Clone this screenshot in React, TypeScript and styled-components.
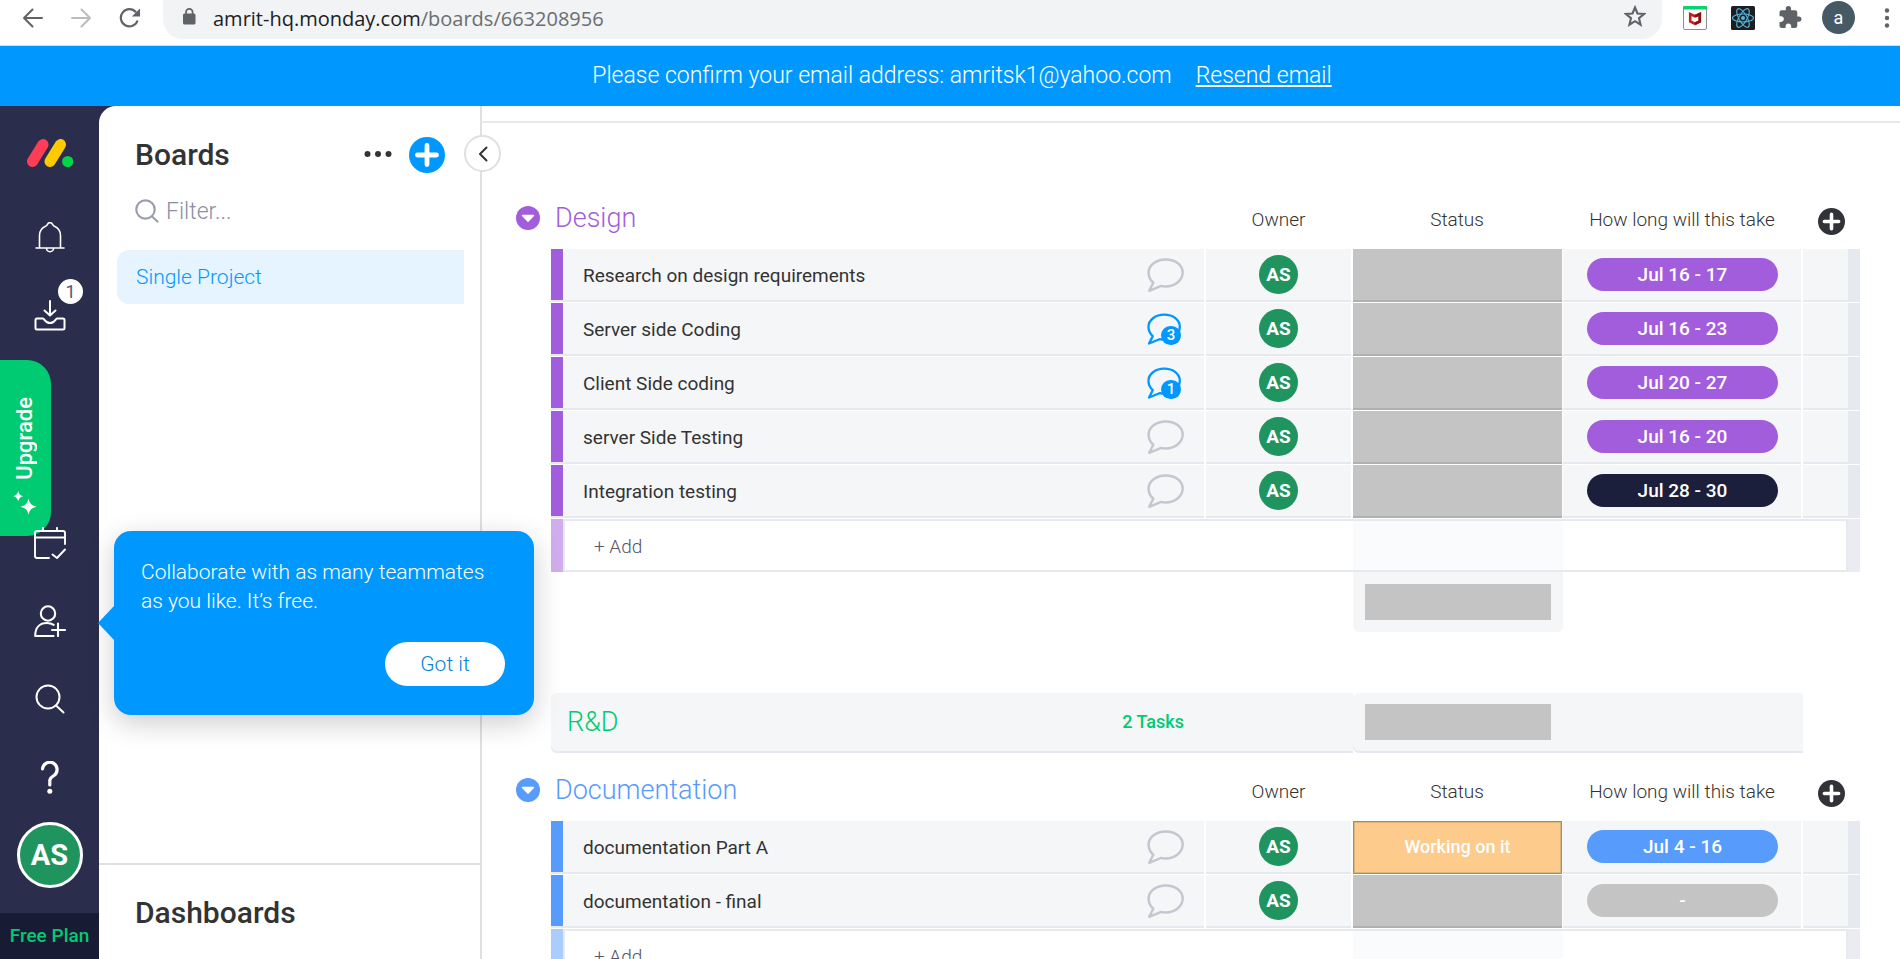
import React from 'react';
import styled, { createGlobalStyle } from 'styled-components';

const GlobalStyle = createGlobalStyle`
  *, *::before, *::after { box-sizing: border-box; }
  body {
    margin: 0;
    background: #fff;
    color: #333;
    font-family: Roboto, "Liberation Sans", sans-serif;
    font-size: 19px;
  }
  button, input { font: inherit; color: inherit; }
  h2, p { margin: 0; }
`;

const Page = styled.div`
  display: flex;
  flex-direction: column;
  height: 100vh;
  overflow: hidden;
`;

const PlainButton = styled.button`
  display: flex;
  align-items: center;
  justify-content: center;
  padding: 0;
  border: 0;
  background: none;
  cursor: pointer;
`;

/* ---------- Browser bar ---------- */

const BrowserBar = styled.header`
  flex: none;
  display: flex;
  align-items: flex-start;
  height: 46px;
  padding: 0 10px 0 23px;
  border-bottom: 1px solid #dadce0;
`;

const NavButtons = styled.div`
  display: flex;
  gap: 28px;
  margin-right: 22px;
`;

const BarButton = styled(PlainButton)`
  height: 35px;
`;

const AddressBar = styled.div`
  flex: 1;
  display: flex;
  align-items: center;
  gap: 17px;
  height: 39px;
  padding: 0 16px 7px 20px;
  border-radius: 0 0 20px 20px;
  background: #f1f3f4;
`;

const AddressText = styled.p`
  flex: 1;
  color: #6b6e72;
  font-family: "Open Sans", "Noto Sans", sans-serif;
  font-size: 20px;
  line-height: 28px;
  padding-top: 6px;
`;

const Host = styled.span`
  color: #202124;
`;

const Extensions = styled.div`
  display: flex;
  align-items: center;
  gap: 24px;
  height: 35px;
  padding-left: 21px;
`;

const Profile = styled(PlainButton)`
  width: 33px;
  height: 33px;
  margin: 0 5px 0 -4px;
  border-radius: 50%;
  background: #455a64;
  color: #fff;
  font-size: 18px;
`;

/* ---------- Confirmation banner ---------- */

const Banner = styled.div`
  flex: none;
  display: flex;
  align-items: center;
  justify-content: center;
  gap: 24px;
  height: 60px;
  padding-left: 24px;
  background: #0098ff;
  color: #fff;
  font-size: 23px;
  font-weight: 300;
  line-height: 28px;
`;

const BannerLink = styled.a`
  color: inherit;
`;

/* ---------- Application frame ---------- */

const AppBody = styled.div`
  position: relative;
  flex: 1;
  display: flex;
  min-height: 0;
  background: #2b2d4c;
`;

const Sidebar = styled.nav`
  flex: none;
  display: flex;
  flex-direction: column;
  align-items: center;
  width: 99px;
  color: #fff;
`;

const LogoLink = styled.a`
  display: flex;
  align-items: flex-start;
  height: 92px;
  padding: 33px 0 0 2px;
`;

const SideButton = styled(PlainButton)`
  position: relative;
  width: 99px;
  height: 78px;
`;

const InboxCount = styled.span`
  position: absolute;
  top: 3px;
  right: 16px;
  width: 25px;
  border-radius: 13px;
  background: #fff;
  color: #54566f;
  font-size: 18px;
  line-height: 25px;
`;

const SideSpacer = styled.div`
  position: relative;
  flex: 1;
  align-self: stretch;
`;

const UpgradeButton = styled(PlainButton)`
  position: absolute;
  top: 6px;
  left: 0;
  width: 51px;
  height: 176px;
  padding: 16px 2px 0 0;
  border-radius: 0 24px 24px 0;
  flex-direction: column;
  gap: 12px;
  background: #00ca72;
  font-size: 22px;
  font-weight: 500;
`;

const UpgradeLabel = styled.span`
  writing-mode: vertical-rl;
  transform: rotate(180deg);
  line-height: 28px;
`;

const UserAvatar = styled.span`
  width: 66px;
  border: 3px solid #fff;
  border-radius: 50%;
  background: #20945e;
  font-size: 29px;
  font-weight: 700;
  line-height: 60px;
`;

const PlanLink = styled.a`
  align-self: stretch;
  height: 46px;
  margin-top: 19px;
  background: #171b33;
  color: #00ca72;
  font-weight: 500;
  line-height: 46px;
  text-align: center;
  text-decoration: none;
`;

/* ---------- Boards panel ---------- */

const Panel = styled.aside`
  position: relative;
  flex: none;
  display: flex;
  flex-direction: column;
  width: 383px;
  border-right: 2px solid #e0e0e0;
  border-radius: 17px 0 0 0;
  background: #fff;
`;

const PanelHeader = styled.div`
  display: flex;
  align-items: center;
  height: 36px;
  margin: 31px 35px 0 36px;
`;

const PanelTitle = styled.h2`
  flex: 1;
  font-size: 30px;
  font-weight: 500;
  line-height: 34px;
`;

const AddBoard = styled(PlainButton)`
  margin-left: 17px;
`;

const FilterField = styled.label`
  display: flex;
  align-items: center;
  gap: 7px;
  margin: 18px 34px 0 36px;
  height: 40px;
`;

const FilterInput = styled.input`
  flex: 1;
  min-width: 0;
  padding: 0;
  border: 0;
  outline: 0;
  background: none;
  font-size: 23px;
  font-weight: 300;
  &::placeholder { color: #8b8ea1; opacity: 1; }
`;

const BoardLink = styled.a`
  margin: 19px 16px 0 18px;
  padding-left: 19px;
  border-radius: 12px 0 0 12px;
  background: #e5f4ff;
  color: #0098ff;
  font-size: 21px;
  font-weight: 300;
  line-height: 54px;
  text-decoration: none;
`;

const DashboardsSection = styled.section`
  margin-top: auto;
  height: 96px;
  padding: 31px 36px 0;
  border-top: 2px solid #e0e0e0;
`;

const CollapseButton = styled(PlainButton)`
  position: absolute;
  z-index: 1;
  top: 29px;
  right: -21px;
  width: 37px;
  height: 37px;
  border: 2px solid #e0e0e0;
  border-radius: 50%;
  background: #fff;
`;

/* ---------- Board ---------- */

const Board = styled.main`
  flex: 1;
  min-width: 0;
  overflow: hidden;
  background: #fff;
`;

const BoardTopLine = styled.div`
  height: 17px;
  border-bottom: 2px solid #e6e9ef;
`;

const Groups = styled.div`
  padding: 64px 40px 0 34px;
`;

const GroupTable = styled.table<{ $gap: number }>`
  width: 100%;
  margin-top: ${(p) => p.$gap}px;
  table-layout: fixed;
  border-collapse: separate;
  border-spacing: 0;
  td, th { padding: 0; }
`;

const Col = styled.col<{ $w?: number }>`
  width: ${(p) => (p.$w ? `${p.$w}px` : 'auto')};
`;

const HeadCell = styled.th`
  height: 62px;
  font-weight: 300;
  line-height: 24px;
  white-space: nowrap;
`;

const GroupTitle = styled(HeadCell)<{ $color: string }>`
  && { padding-left: 4px; }
  color: ${(p) => p.$color};
  font-size: 27px;
  text-align: left;
`;

const HeadLabel = styled.span`
  display: block;
  padding: 4px 2px 0 0;
`;

const AddColumn = styled(PlainButton)`
  margin: 6px 0 0 15px;
`;

const Cell = styled.td`
  && { padding-bottom: 2px; }
  height: 54px;
  border-right: 2px solid #fff;
  border-bottom: 1px solid #fff;
  background: #f5f6f8;
  box-shadow: inset 0 -2px #e6e9ef;
  text-align: center;
`;

const LastCell = styled(Cell)`
  border-right: 0;
`;

const ColorBar = styled(Cell)<{ $color: string }>`
  border-right: 0;
  background: ${(p) => p.$color};
`;

const EndBar = styled(LastCell)`
  background: #e6e9ef;
`;

const NameContent = styled.div`
  display: flex;
  align-items: center;
  justify-content: space-between;
  padding: 2px 20px 0 20px;
  color: #333;
  line-height: 28px;
`;

const StatusCell = styled(Cell)`
  border-right-width: 1px;
  background: #c4c4c4;
  box-shadow: inset 0 -2px #b0b0b0;
`;

const WorkingCell = styled(Cell)`
  border-right-width: 1px;
  background: #fdcb8c;
  box-shadow: inset 0 0 0 1px #ae8a5b, inset 0 0 0 2px #dfb27a;
  color: #fff;
  font-size: 18px;
  font-weight: 500;
`;

const OwnerAvatar = styled.span`
  display: block;
  width: 39px;
  margin: 0 auto;
  border-radius: 50%;
  background: #20945e;
  color: #fff;
  font-weight: 700;
  line-height: 39px;
`;

const DatePill = styled.span<{ $color: string }>`
  display: block;
  margin: 0 23px 0 24px;
  border-radius: 17px;
  background: ${(p) => p.$color};
  color: #fff;
  font-weight: 500;
  line-height: 33px;
`;

const Chat = styled(PlainButton)`
  position: relative;
  justify-content: flex-start;
  width: 37px;
`;

const ChatCount = styled.span`
  position: absolute;
  top: 13px;
  left: 14px;
  width: 20px;
  border-radius: 10px;
  background: #0098ff;
  color: #fff;
  font-size: 15px;
  font-weight: 500;
  line-height: 19px;
`;

const AddCell = styled.td<{ $tint?: boolean }>`
  height: 53px;
  background: ${(p) => (p.$tint ? '#fafbfd' : '#fff')};
  box-shadow: inset 0 2px #e6e9ef, inset 0 -2px #e6e9ef;
`;

const AddNameCell = styled(AddCell)`
  box-shadow: inset 0 2px #e6e9ef, inset 0 -2px #e6e9ef, inset 2px 0 #e6e9ef;
`;

const AddLastCell = styled(AddCell)`
  box-shadow: inset 0 2px #e6e9ef, inset 0 -2px #e6e9ef, inset -2px 0 #e6e9ef;
`;

const AddBar = styled.td<{ $color: string }>`
  background: ${(p) => p.$color};
`;

const AddInput = styled.input`
  display: block;
  width: 200px;
  margin-left: 31px;
  padding: 2px 0 0;
  border: 0;
  outline: 0;
  background: none;
  font-weight: 300;
  &::placeholder { color: #55566b; opacity: 1; }
`;

const SummaryCell = styled.td`
  height: 60px;
  border-radius: 0 0 6px 6px;
  background: #f5f6f8;
`;

const SummaryBlock = styled.div`
  height: 36px;
  margin: 0 12px;
  background: #c4c4c4;
`;

const CollapsedCell = styled.td`
  && { padding-bottom: 2px; }
  height: 60px;
  background: #f5f6f8;
  box-shadow: inset 0 -2px #e6e9ef;
  border-radius: 6px 0 0 6px;
`;

const CollapsedEnd = styled(CollapsedCell)`
  border-radius: 0;
`;

const CollapsedTitle = styled.div`
  display: flex;
  align-items: center;
  justify-content: space-between;
  padding: 0 169px 0 16px;
  color: #00ca72;
  line-height: 32px;
`;

const CollapsedName = styled.h2`
  font-size: 27px;
  font-weight: 300;
`;

const TaskCount = styled.span`
  font-size: 18px;
  font-weight: 500;
`;

/* ---------- Teammates tip ---------- */

const Tip = styled.div`
  position: absolute;
  z-index: 2;
  top: 425px;
  left: 114px;
  width: 420px;
  height: 184px;
  padding: 27px 29px 29px 27px;
  border-radius: 17px;
  background: #0098ff;
  box-shadow: 0 8px 28px rgba(0, 0, 0, 0.2);
  color: #fff;
  font-size: 21px;
  font-weight: 300;
  line-height: 29px;
  display: flex;
  flex-direction: column;
  justify-content: space-between;
  &::before {
    content: '';
    position: absolute;
    top: 75px;
    left: -16px;
    border: solid transparent;
    border-width: 17px 16px 17px 0;
    border-right-color: #0098ff;
  }
`;

const TipButton = styled(PlainButton)`
  align-self: flex-end;
  width: 120px;
  height: 44px;
  border-radius: 22px;
  background: #fff;
  color: #0085d9;
`;

/* ---------- Icons ---------- */

const Line: React.FC<{ w: number; h: number; sw?: number; color?: string; children: React.ReactNode }> = ({
  w, h, sw = 2, color = 'currentColor', children,
}) => (
  <svg width={w} height={h} viewBox={`0 0 ${w} ${h}`} fill="none" stroke={color} strokeWidth={sw}
    strokeLinecap="round" strokeLinejoin="round" aria-hidden="true">
    {children}
  </svg>
);

const Arrow = ({ forward }: { forward?: boolean }) => (
  <Line w={20} h={20} sw={2} color={forward ? '#babcbe' : '#5f6368'}>
    {forward ? <path d="M1 10h18M10.500 1.500 19 10l-8.500 8.500" /> : <path d="M19 10H1M9.500 1.500 1 10l8.500 8.500" />}
  </Line>
);

const Reload = () => (
  <svg width="22" height="20" viewBox="0 0 22 20" aria-hidden="true">
    <path d="M17 4.200A8.600 8.600 0 1 0 18.600 12.500" fill="none" stroke="#5f6368" strokeWidth="2.200" />
    <path d="M21 .5V8.500H12.800z" fill="#5f6368" />
  </svg>
);

const Lock = () => (
  <svg width="13" height="17" viewBox="0 0 13 17" aria-hidden="true">
    <rect y="5.500" width="12.500" height="11" rx="1.500" fill="#5f6368" />
    <path d="M3 6.500V4.200a3.300 3.300 0 0 1 6.600 0v2.300" fill="none" stroke="#5f6368" strokeWidth="1.700" />
  </svg>
);

const Star = () => (
  <svg width="22" height="22" viewBox="0 0 22 22" aria-hidden="true">
    <path d="M11 2.500l2.500 6 6.500.5-5 4.200 1.600 6.500L11 16.200l-5.600 3.500L7 13.200 2 9l6.500-.5z"
      fill="none" stroke="#5f6368" strokeWidth="2.100" />
  </svg>
);

const ShieldExt = () => (
  <svg width="24" height="24" viewBox="0 0 24 24" aria-hidden="true">
    <rect x=".5" y=".5" width="23" height="23" rx="1.500" fill="#fff" stroke="#8d8d8d" />
    <path d="M0 1q0-1 1-1h22q1 0 1 1v2.500H0z" fill="#08d36d" />
    <path d="M7.200 8v7.500L12 17.700l4.800-2.200V8L12 10.200z" fill="none" stroke="#c31f1f" strokeWidth="2.600" />
    <path d="M12 17.700l4.800-2.200V8L12 10.200" fill="none" stroke="#8b1010" strokeWidth="2.600" />
  </svg>
);

const ReactExt = () => (
  <svg width="24" height="24" viewBox="0 0 24 24" aria-hidden="true">
    <rect width="24" height="24" rx="1.500" fill="#1c1e22" />
    <g fill="none" stroke="#55b7de" strokeWidth="1.100">
      <ellipse cx="12" cy="12" rx="10.500" ry="4" />
      <ellipse cx="12" cy="12" rx="10.500" ry="4" transform="rotate(60 12 12)" />
      <ellipse cx="12" cy="12" rx="10.500" ry="4" transform="rotate(120 12 12)" />
    </g>
    <circle cx="12" cy="12" r="2" fill="#55b7de" />
  </svg>
);

const Puzzle = () => (
  <svg width="23" height="23" viewBox="1.500 1 22 22" fill="#5f6368" aria-hidden="true">
    <path d="M20.500 11H19V7c0-1.100-.9-2-2-2h-4V3.500a2.500 2.500 0 0 0-5 0V5H4c-1.100 0-1.990.9-1.990 2v3.800H3.500c1.490 0 2.700 1.210 2.700 2.700s-1.210 2.700-2.700 2.700H2V20c0 1.100.9 2 2 2h3.800v-1.500c0-1.490 1.210-2.700 2.700-2.700s2.700 1.210 2.700 2.700V22H17c1.100 0 2-.9 2-2v-4h1.500a2.500 2.500 0 0 0 0-5z" />
  </svg>
);

const Kebab = () => (
  <svg width="6" height="20" viewBox="0 0 6 20" fill="#5f6368" aria-hidden="true">
    <circle cx="3" cy="2.500" r="2.200" /><circle cx="3" cy="10" r="2.200" /><circle cx="3" cy="17.500" r="2.200" />
  </svg>
);

const Logo = () => (
  <svg width="47" height="28" viewBox="0 0 47 28" aria-hidden="true">
    <path d="M5.500 22.500 16 5.500" stroke="#ff3d57" strokeWidth="11" strokeLinecap="round" />
    <path d="M23 22.500 33.500 5.500" stroke="#ffcb00" strokeWidth="11" strokeLinecap="round" />
    <circle cx="40.700" cy="22.500" r="5.600" fill="#00d647" />
  </svg>
);

const Bell = () => (
  <Line w={30} h={31} sw={1.600}>
    <path d="M1 26h28M4.500 26V13.500C4.500 8.500 7.500 5.500 11 4c.8-.4 1.200-1 1.600-1.800a2.600 2.600 0 0 1 4.800 0c.4.8.8 1.400 1.600 1.800 3.500 1.500 6.500 4.500 6.500 9.500V26M11.500 26.500a3.500 3.200 0 0 0 7 0" />
  </Line>
);

const Inbox = () => (
  <Line w={32} h={32} sw={2}>
    <path d="M16 2v14M10.500 11.500 16 16.500l5.500-5" />
    <path d="M3 19.500h6c1.500 0 2 4.500 7 4.500s5.500-4.500 7-4.500h6q1.500 0 1.500 1.500v8q0 1.500-1.500 1.500H3q-1.500 0-1.500-1.500v-8q0-1.500 1.500-1.500z" />
  </Line>
);

const Sparkles = () => (
  <svg width="24" height="24" viewBox="0 0 24 24" fill="#fff" aria-hidden="true">
    <path d="M15.500 7.500q1 7 8 8.200-7 1.200-8 8.200-1-7-8-8.200 7-1.200 8-8.200z" />
    <path d="M5.200 0q.8 4.500 5 5.200-4.200.7-5 5.200-.8-4.500-5-5.200 4.200-.7 5-5.200z" />
  </svg>
);

const Calendar = () => (
  <Line w={32} h={33} sw={1.900}>
    <path d="M15 31H3q-2 0-2-2V6q0-2 2-2h26q2 0 2 2v11M1 10.500h30M9 .9V4M23 .9V4M18.500 27.500l4.500 3.500 8-8.500" />
  </Line>
);

const Invite = () => (
  <Line w={32} h={32} sw={2.100}>
    <circle cx="14" cy="8.500" r="7.200" />
    <path d="M19.500 31H1.200c0-9 5-13 11.500-13 3 0 5 .5 7 1.800M24 18.500v12.500M18 25h13" />
  </Line>
);

const Search = ({ size, sw }: { size: number; sw: number }) => (
  <svg width={size} height={size} viewBox="0 0 30 30" fill="none" stroke="currentColor" strokeWidth={sw}
    strokeLinecap="round" aria-hidden="true">
    <circle cx="13" cy="13" r="11.500" /><path d="M21 21.500 28.500 28.500" />
  </svg>
);

const Question = () => (
  <svg width="20" height="33" viewBox="0 0 20 33" aria-hidden="true">
    <path d="M2.500 8a7.300 7.300 0 1 1 11.500 6.500q-4.200 2.500-4.200 5V24" fill="none" stroke="#fff" strokeWidth="3.200" strokeLinecap="round" />
    <circle cx="9.800" cy="30.200" r="2.500" fill="#fff" />
  </svg>
);

const Dots = () => (
  <svg width="28" height="8" viewBox="0 0 28 8" fill="#333" aria-hidden="true">
    <circle cx="3.500" cy="3" r="3" /><circle cx="14" cy="3" r="3" /><circle cx="24.500" cy="3" r="3" />
  </svg>
);

const PlusDisc = ({ size, color }: { size: number; color: string }) => (
  <svg width={size} height={size} viewBox="0 0 36 36" aria-hidden="true">
    <circle cx="18" cy="18" r="18" fill={color} />
    <path d="M18 8.500v19M8.500 18h19" stroke="#fff" strokeWidth="4.800" strokeLinecap="round" />
  </svg>
);

const ToggleDisc = ({ color }: { color: string }) => (
  <svg width="24" height="24" viewBox="0 0 24 24" aria-hidden="true">
    <circle cx="12" cy="12" r="12" fill={color} />
    <path d="M6.500 9.500h11L12 15.200z" fill="#fff" stroke="#fff" strokeWidth="1.400" strokeLinejoin="round" />
  </svg>
);

const Bubble = ({ active }: { active?: boolean }) => (
  <svg width={active ? 34 : 37} height={active ? 33 : 35} viewBox="0 0 37 35" fill="none" aria-hidden="true"
    stroke={active ? '#0098ff' : '#c5c7d0'} strokeWidth="2.500" strokeLinejoin="round">
    <path d="M18.800 1.400c9.700 0 16.900 5.800 16.900 13.200s-7.300 13.900-16.900 13.900c-1.600 0-3.200-.2-4.600-.6L2.200 32.800l4.100-8.100c-3-2.500-4.700-6-4.700-10.100 0-7.400 7.500-13.200 17.200-13.200z" />
  </svg>
);

/* ---------- Data ---------- */

type Task = { name: string; date: string; pill: string; updates?: number; status?: string };

const designTasks: Task[] = [
  { name: 'Research on design requirements', date: 'Jul 16 - 17', pill: '#a25ddc' },
  { name: 'Server side Coding', date: 'Jul 16 - 23', pill: '#a25ddc', updates: 3 },
  { name: 'Client Side coding', date: 'Jul 20 - 27', pill: '#a25ddc', updates: 1 },
  { name: 'server Side Testing', date: 'Jul 16 - 20', pill: '#a25ddc' },
  { name: 'Integration testing', date: 'Jul 28 - 30', pill: '#1c1f3b' },
];

const documentationTasks: Task[] = [
  { name: 'documentation Part A', date: 'Jul 4 - 16', pill: '#579bfc', status: 'Working on it' },
  { name: 'documentation - final', date: '-', pill: '#c4c4c4' },
];

const Columns = () => (
  <colgroup>
    <Col $w={35} /><Col $w={12} /><Col /><Col $w={147} /><Col $w={210} /><Col $w={240} /><Col $w={45} /><Col $w={12} />
  </colgroup>
);

type GroupProps = { title: string; color: string; faded: string; gap: number; tasks: Task[] };

const Group = ({ title, color, faded, gap, tasks }: GroupProps) => (
  <GroupTable $gap={gap}>
    <Columns />
    <thead>
      <tr>
        <HeadCell>
          <PlainButton aria-label={`Collapse ${title}`}><ToggleDisc color={color} /></PlainButton>
        </HeadCell>
        <GroupTitle colSpan={2} $color={color}>{title}</GroupTitle>
        <HeadCell><HeadLabel>Owner</HeadLabel></HeadCell>
        <HeadCell><HeadLabel>Status</HeadLabel></HeadCell>
        <HeadCell><HeadLabel>How long will this take</HeadLabel></HeadCell>
        <HeadCell colSpan={2}>
          <AddColumn aria-label="Add column"><PlusDisc size={27} color="#323338" /></AddColumn>
        </HeadCell>
      </tr>
    </thead>
    <tbody>
      {tasks.map((task) => (
        <tr key={task.name}>
          <td />
          <ColorBar $color={color} />
          <Cell>
            <NameContent>
              {task.name}
              <Chat aria-label={`Updates for ${task.name}`}>
                <Bubble active={!!task.updates} />
                {task.updates && <ChatCount>{task.updates}</ChatCount>}
              </Chat>
            </NameContent>
          </Cell>
          <Cell><OwnerAvatar>AS</OwnerAvatar></Cell>
          {task.status ? <WorkingCell>{task.status}</WorkingCell> : <StatusCell />}
          <Cell><DatePill $color={task.pill}>{task.date}</DatePill></Cell>
          <LastCell />
          <EndBar />
        </tr>
      ))}
      <tr>
        <td />
        <AddBar $color={faded} />
        <AddNameCell><AddInput aria-label={`Add to ${title}`} placeholder="+ Add" /></AddNameCell>
        <AddCell />
        <AddCell $tint />
        <AddCell />
        <AddLastCell />
        <AddBar $color="#ebecf2" />
      </tr>
    </tbody>
    <tfoot>
      <tr>
        <td colSpan={4} />
        <SummaryCell><SummaryBlock /></SummaryCell>
        <td colSpan={3} />
      </tr>
    </tfoot>
  </GroupTable>
);

export default function App() {
  return (
    <Page>
      <GlobalStyle />
      <BrowserBar>
        <NavButtons>
          <BarButton aria-label="Back"><Arrow /></BarButton>
          <BarButton aria-label="Forward"><Arrow forward /></BarButton>
          <BarButton aria-label="Reload"><Reload /></BarButton>
        </NavButtons>
        <AddressBar>
          <Lock />
          <AddressText><Host>amrit-hq.monday.com</Host>/boards/663208956</AddressText>
          <PlainButton aria-label="Bookmark"><Star /></PlainButton>
        </AddressBar>
        <Extensions>
          <PlainButton aria-label="McAfee"><ShieldExt /></PlainButton>
          <PlainButton aria-label="React tools"><ReactExt /></PlainButton>
          <PlainButton aria-label="Extensions"><Puzzle /></PlainButton>
          <Profile>a</Profile>
          <PlainButton aria-label="Menu"><Kebab /></PlainButton>
        </Extensions>
      </BrowserBar>

      <Banner>
        <span>Please confirm your email address: amritsk1@yahoo.com</span>
        <BannerLink href="#resend">Resend email</BannerLink>
      </Banner>

      <AppBody>
        <Sidebar>
          <LogoLink href="#home" aria-label="Home"><Logo /></LogoLink>
          <SideButton aria-label="Notifications"><Bell /></SideButton>
          <SideButton aria-label="Inbox"><Inbox /><InboxCount>1</InboxCount></SideButton>
          <SideSpacer>
            <UpgradeButton><UpgradeLabel>Upgrade</UpgradeLabel><Sparkles /></UpgradeButton>
          </SideSpacer>
          <SideButton aria-label="My week"><Calendar /></SideButton>
          <SideButton aria-label="Invite members"><Invite /></SideButton>
          <SideButton aria-label="Search"><Search size={30} sw={2} /></SideButton>
          <SideButton aria-label="Help"><Question /></SideButton>
          <SideButton><UserAvatar>AS</UserAvatar></SideButton>
          <PlanLink href="#plan">Free Plan</PlanLink>
        </Sidebar>

        <Panel>
          <PanelHeader>
            <PanelTitle>Boards</PanelTitle>
            <PlainButton aria-label="Board options"><Dots /></PlainButton>
            <AddBoard aria-label="Add board"><PlusDisc size={36} color="#0098ff" /></AddBoard>
          </PanelHeader>
          <FilterField>
            <Line w={24} h={24} sw={2.200} color="#9a9eb0">
              <circle cx="10.500" cy="10.500" r="9.200" /><path d="M17 17.500 22.500 22.500" />
            </Line>
            <FilterInput aria-label="Filter boards" placeholder="Filter..." />
          </FilterField>
          <BoardLink href="#single-project">Single Project</BoardLink>
          <DashboardsSection><PanelTitle>Dashboards</PanelTitle></DashboardsSection>
          <CollapseButton aria-label="Collapse panel">
            <Line w={10} h={16} sw={2} color="#333"><path d="M8.500 1.500 2 8l6.500 6.500" /></Line>
          </CollapseButton>
        </Panel>

        <Board>
          <BoardTopLine />
          <Groups>
            <Group title="Design" color="#a25ddc" faded="#d0aeed" gap={0} tasks={designTasks} />
            <GroupTable $gap={61}>
              <Columns />
              <tbody>
                <tr>
                  <td />
                  <CollapsedCell colSpan={3}>
                    <CollapsedTitle>
                      <CollapsedName>R&amp;D</CollapsedName>
                      <TaskCount>2 Tasks</TaskCount>
                    </CollapsedTitle>
                  </CollapsedCell>
                  <CollapsedCell><SummaryBlock /></CollapsedCell>
                  <CollapsedEnd />
                  <td colSpan={2} />
                </tr>
              </tbody>
            </GroupTable>
            <Group title="Documentation" color="#579bfc" faded="#abcdfd" gap={6} tasks={documentationTasks} />
          </Groups>
        </Board>

        <Tip role="dialog" aria-label="Invite teammates">
          <p>Collaborate with as many teammates as you like. It’s free.</p>
          <TipButton>Got it</TipButton>
        </Tip>
      </AppBody>
    </Page>
  );
}
